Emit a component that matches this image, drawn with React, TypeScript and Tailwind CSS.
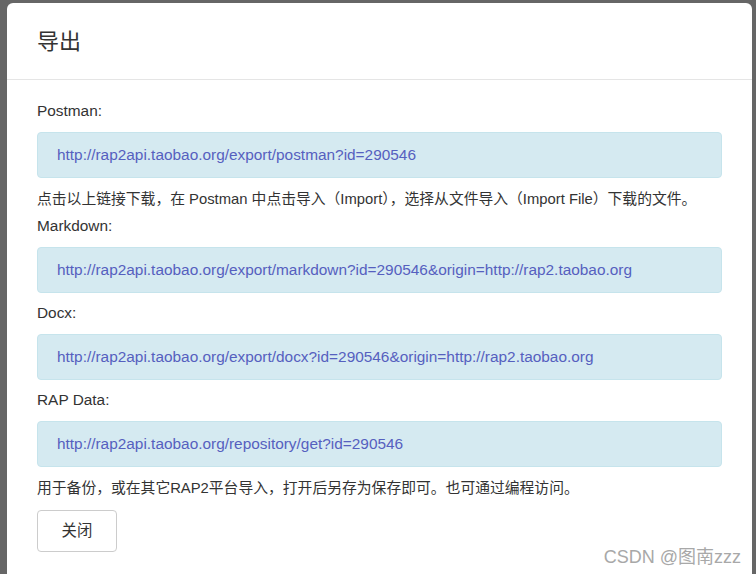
const font = {
  fontFamily: '"Liberation Sans", Arial, "Noto Sans CJK SC", sans-serif',
};

const exportsList = [
  {
    label: 'Postman:',
    url: 'http://rap2api.taobao.org/export/postman?id=290546',
    help: '点击以上链接下载，在 Postman 中点击导入（Import），选择从文件导入（Import File）下载的文件。',
  },
  {
    label: 'Markdown:',
    url: 'http://rap2api.taobao.org/export/markdown?id=290546&origin=http://rap2.taobao.org',
  },
  {
    label: 'Docx:',
    url: 'http://rap2api.taobao.org/export/docx?id=290546&origin=http://rap2.taobao.org',
  },
  {
    label: 'RAP Data:',
    url: 'http://rap2api.taobao.org/repository/get?id=290546',
    help: '用于备份，或在其它RAP2平台导入，打开后另存为保存即可。也可通过编程访问。',
  },
];

export default function App() {
  return (
    <div
      className="relative h-[574px] w-[756px] overflow-hidden bg-[#666666] pl-[7px] pr-[4px] pt-[3px]"
      style={font}
    >
      <div className="h-full rounded-t-[6px] bg-white">
        <div className="flex h-[77px] items-center border-b border-[#e5e5e5] px-[30px]">
          <h2 className="text-[22px] font-normal text-[#333]">导出</h2>
        </div>

        <div className="px-[30px] pt-[20px] text-[15.4px] leading-[22px] text-[#333]">
          {exportsList.map((item, index) => (
            <div
              key={item.label}
              className={index === 1 ? 'mt-[5px]' : index > 1 ? 'mt-[9px]' : ''}
            >
              <div>{item.label}</div>
              <div className="mt-[10px] rounded-[4px] border border-[#c6e4ec] bg-[#d5eaf1] px-[19px] py-[11px]">
                <a href="#" className="text-[#5560bf]">
                  {item.url}
                </a>
              </div>
              {item.help && (
                <div className="mt-[10px] whitespace-nowrap text-[14.8px]">{item.help}</div>
              )}
            </div>
          ))}

          <button
            type="button"
            className="mt-[11px] h-[42px] w-[80px] rounded-[4px] border border-[#cccccc] bg-white text-[15.4px] text-[#333]"
          >
            关闭
          </button>
        </div>
      </div>

      <div className="absolute bottom-[7px] right-[15px] text-[18px] leading-[20px] text-[#a8a8a8]">
        CSDN @图南zzz
      </div>
    </div>
  );
}
